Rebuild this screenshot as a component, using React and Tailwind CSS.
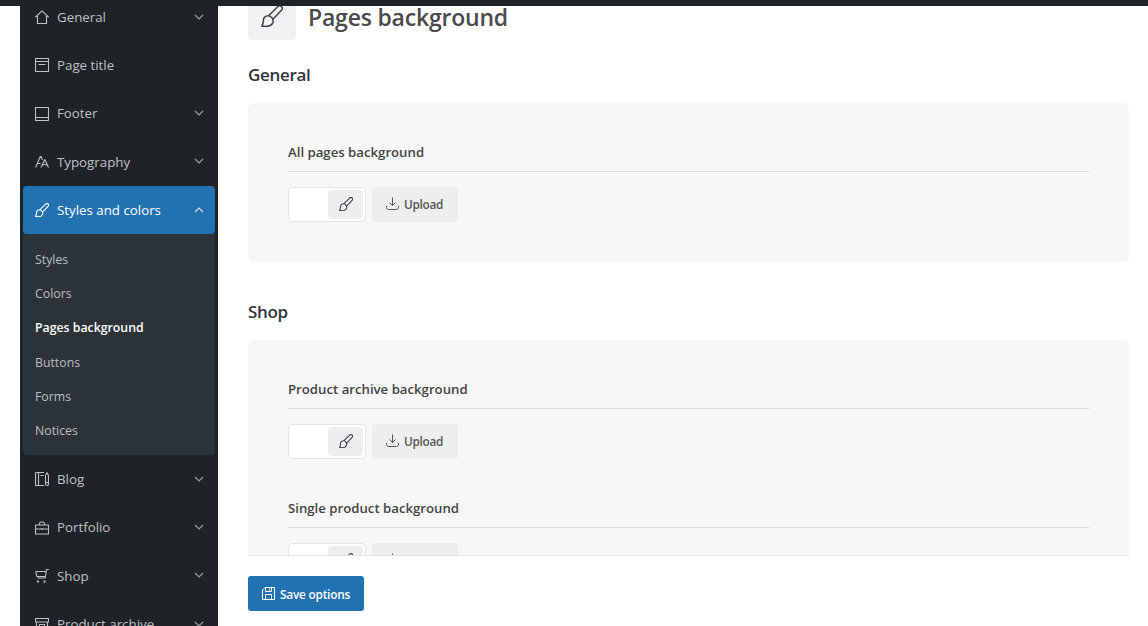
const ICONS = {
  home: (
    <path d="M.3 7.300 7 .8l6.700 6.500M2.500 6v7.500h9V6" />
  ),
  pageTitle: (
    <path d="M.5.5h13v13H.5zM.5 3.500h13M3.500 6.500h7" />
  ),
  footer: <path d="M.5.5h13v13H.5zM.5 10.500h13" />,
  typography: (
    <path d="M.6 12.500 5.300 1.500h.8l1.200 3.500M2.300 8.500h3.200M6 12.500 9.800 4.500l3.700 8M7.400 9.800h4.800" />
  ),
  brush: (
    <path d="M4.800 6.800 10.600 1.100c1.700-1.600 4 .6 2.400 2.300L7.500 9.300M4.800 6.800C2.700 6.700 1.400 8.200 1.500 10.200c0 1.400-.4 2.400-1 3.200 2.400.5 6.300.3 7.100-2.300.4-1.900-.7-3.900-2.800-4.300z" />
  ),
  blog: (
    <path d="M.5.5h8.500M.5.5v13h8.500M3.500.5v13M5.500 3.500h3M10.500 3.500 12 .7l1.500 2.800v8.500c0 2-3 2-3 0zM10.500 10.500h3" />
  ),
  portfolio: (
    <path d="M.5 4h13v9H.5zM.5 8h13M4.500 4v-1.200c0-1 .8-1.800 1.800-1.800h1.400c1 0 1.800.8 1.800 1.800v1.200M7 7v2" />
  ),
  archive: (
    <path d="M.5 1.500h13v3.500H.5zM1.500 5v8.500h11V5M4.500 7.500h5v2h-5z" />
  ),
}

function Icon({ name, className, strokeWidth = 1.1 }) {
  return (
    <svg viewBox="0 0 14 14" fill="none" stroke="currentColor" strokeWidth={strokeWidth} strokeLinejoin="round" className={className}>
      {name === 'cart' ? (
        <>
          <path d="M13.800.5h-2.300l-1.300 8.500H2.500M.6 2.500h10.400M.6 2.500l1.300 5h8.500" />
          <path d="M2 11.500h2v2H2zM8.500 11.500h2v2h-2z" fill="currentColor" stroke="none" />
        </>
      ) : (
        ICONS[name]
      )}
    </svg>
  )
}

function Chevron({ up }) {
  return (
    <svg viewBox="0 0 10 6" fill="none" stroke="currentColor" strokeWidth="1.15" className="h-1.5 w-2.5 opacity-80">
      <path d={up ? 'M1 5 5 1l4 4' : 'M1 1l4 4 4-4'} />
    </svg>
  )
}

function NavItem({ icon, label, active, chevron = true }) {
  return (
    <a className={`flex h-[48.25px] shrink-0 items-center rounded-t px-3 ${active ? 'rounded-b bg-[#2271b1] text-white' : 'text-[#c0c2c3]'}`}>
      <Icon name={icon} className="mr-2 size-3.5 shrink-0" />
      <span className="pt-[1.5px] text-[13.3px] whitespace-nowrap">{label}</span>
      {chevron && (
        <span className="mr-[-1px] mb-px ml-auto flex">
          <Chevron up={active} />
        </span>
      )}
    </a>
  )
}

const SUBMENU = ['Styles', 'Colors', 'Pages background', 'Buttons', 'Forms', 'Notices']

function Sidebar() {
  return (
    <aside className="ml-5 w-[198px] shrink-0 overflow-hidden bg-[#1d2327] px-[3px]">
      <nav className="-mt-[13px] flex flex-col">
        <NavItem icon="home" label="General" />
        <NavItem icon="pageTitle" label="Page title" chevron={false} />
        <NavItem icon="footer" label="Footer" />
        <NavItem icon="typography" label="Typography" />
        <div className="rounded bg-[#2c3338] pb-[6.75px]">
          <NavItem icon="brush" label="Styles and colors" active />
          <ul className="pt-[8.75px]">
            {SUBMENU.map((label) => (
              <li
                key={label}
                className={`flex h-[34.25px] items-center px-3 text-[12.3px] whitespace-nowrap ${label === 'Pages background' ? 'pb-px font-semibold text-white' : 'text-[#bcbfc1]'}`}
              >
                {label}
              </li>
            ))}
          </ul>
        </div>
        <NavItem icon="blog" label="Blog" />
        <NavItem icon="portfolio" label="Portfolio" />
        <NavItem icon="cart" label="Shop" />
        <NavItem icon="archive" label="Product archive" />
      </nav>
    </aside>
  )
}

function Field({ title }) {
  return (
    <div className="h-[119px]">
      <h3 className="flex h-[29px] items-start border-b border-[#dcdcdc] text-[13.2px] leading-[18px] font-semibold text-[#444]">{title}</h3>
      <div className="mt-[15px] flex gap-1.5">
        <div className="flex h-[35px] w-[78px] justify-end rounded border border-[#e4e4e4] bg-white p-0.5">
          <span className="flex w-[35px] items-center justify-center rounded bg-[#eee] pb-px text-[#3c434a]">
            <Icon name="brush" className="size-3.5" />
          </span>
        </div>
        <button className="flex h-[35px] w-[86px] items-center rounded bg-[#eee] pl-3.5 text-[11.8px] font-semibold tracking-[-0.3px] text-[#555]">
          <svg viewBox="0 0 13 13" fill="none" stroke="currentColor" className="mr-[5px] mb-0.5 size-[13px]">
            <path d="M6.500.5v8M3.500 5.500l3 3 3-3M.5 9v1.500c0 1.200.8 2 2 2h8c1.200 0 2-.8 2-2V9" />
          </svg>
          <span className="pt-px">Upload</span>
        </button>
      </div>
    </div>
  )
}

function Section({ title, fields, className }) {
  return (
    <section className={className}>
      <h2 className="h-[38px] text-[17px] leading-[20px] font-semibold tracking-[-0.3px] text-[#2f3439]">{title}</h2>
      <div className="rounded-md bg-[#f7f7f7] px-10 pt-10">
        {fields.map((field) => (
          <Field key={field} title={field} />
        ))}
      </div>
    </section>
  )
}

export default function App() {
  return (
    <div className="flex h-[626px] w-[1148px] flex-col overflow-hidden bg-white font-['Open_Sans',sans-serif]">
      <div className="h-1.5 shrink-0 bg-[#1d2327]" />
      <div className="flex min-h-0 flex-1">
        <Sidebar />
        <main className="ml-[30px] flex w-[881px] flex-col">
          <div className="h-[550px] shrink-0 overflow-hidden border-b border-[#e4e4e4]">
            <header className="-mt-3.5 flex h-12 items-center">
              <span className="flex size-12 items-center justify-center rounded bg-[#f2f2f2] text-[#3c434a]">
                <Icon name="brush" className="size-[22px]" strokeWidth={0.95} />
              </span>
              <h1 className="ml-3 pt-[2px] text-[23px] leading-8 font-semibold tracking-[-0.2px] text-[#4a4a4a]">Pages background</h1>
            </header>
            <Section title="General" fields={['All pages background']} className="mt-[25px]" />
            <Section title="Shop" fields={['Product archive background', 'Single product background']} className="mt-10" />
          </div>
          <button className="mt-5 flex h-[35px] w-[116px] items-center rounded-[3px] bg-[#2271b1] pl-3.5 text-[11.8px] font-semibold tracking-[-0.2px] whitespace-nowrap text-white">
            <svg viewBox="0 0 13 13" fill="none" stroke="currentColor" className="mr-[5px] size-[13px] shrink-0">
              <path d="M3 .5h9.500v12H.5V3zM3.500.8v3.700h6V.8M3.500 12.500v-5h6v5M7.500 1.500v2" />
            </svg>
            <span className="pt-0.5">Save options</span>
          </button>
        </main>
      </div>
    </div>
  )
}
